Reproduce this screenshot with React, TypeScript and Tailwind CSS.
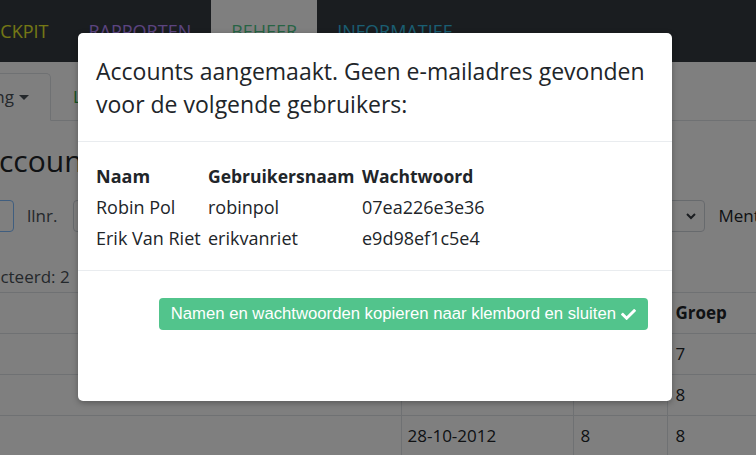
import { FaCheck } from "react-icons/fa";

const navItems = [
  { label: "COCKPIT", color: "text-[#e8ee2a]", active: false },
  { label: "RAPPORTEN", color: "text-[#b889ff]", active: false },
  { label: "BEHEER", color: "text-[#4fc98a]", active: true },
  { label: "INFORMATIEF", color: "text-[#34bde4]", active: false },
];

const users = [
  { naam: "Robin Pol", gebruiker: "robinpol", wachtwoord: "07ea226e3e36" },
  { naam: "Erik Van Riet", gebruiker: "erikvanriet", wachtwoord: "e9d98ef1c5e4" },
];

const rows = [
  { id: 1, datum: "02-03-2012", leerjaar: "7", groep: "7" },
  { id: 2, datum: "19-11-2012", leerjaar: "8", groep: "8" },
  { id: 3, datum: "28-10-2012", leerjaar: "8", groep: "8" },
];

function Page() {
  return (
    <div className="w-full h-full bg-white text-[#212529]">
      <nav className="h-[62px] bg-[#343a40] flex items-stretch ml-[-45px]">
        {navItems.map((item) => (
          <a
            key={item.label}
            href="#"
            className={`px-5 flex items-center text-[18px] ${item.color} ${
              item.active ? "bg-white" : ""
            }`}
          >
            {item.label}
          </a>
        ))}
      </nav>

      <div className="ml-[-20px] w-[900px]">
        <div className="mt-[11px] h-[48px] flex items-stretch border-b border-[#dee2e6]">
          <div className="w-[71px] border border-[#dee2e6] border-b-white rounded-tr-[5px] mb-[-1px] flex items-center justify-end pr-[21px] text-[17px] text-[#495057]">
            <span className="ml-[-60px] whitespace-nowrap">Indeling</span>
            <span className="ml-[5px] border-x-[5px] border-x-transparent border-t-[5px] border-t-[#495057]" />
          </div>
          <a href="#" className="pl-[22px] flex items-center text-[17px] text-[#28a745]">
            Leerlingen
          </a>
        </div>

        <h1 className="mt-[22px] text-[30px] leading-[36px]">Accounts beheren</h1>

        <div className="mt-[21px] flex items-center h-[32px] text-[17px]">
          <div className="w-[34px] h-[32px] border border-[#80bdff] rounded-[4px]" />
          <span className="ml-[13px] text-[#495057]">llnr.</span>
          <div className="ml-[16px] w-[300px] h-[32px] border border-[#ced4da] rounded-[4px]" />
          <div className="ml-[152px] w-[180px] h-[32px] border border-[#ced4da] rounded-[4px] flex items-center justify-end pr-[8px]">
            <svg width="10" height="7" viewBox="0 0 10 7">
              <path d="M1 1l4 4 4-4" fill="none" stroke="#343a40" strokeWidth="2" />
            </svg>
          </div>
          <span className="ml-[13px]">Mentor</span>
        </div>

        <div className="mt-[33px] ml-[-33px] h-[24px] leading-[24px] text-[17px] text-[#495057]">
          Geselecteerd: 2
        </div>

        <table className="mt-[3px] border-collapse text-[17px]">
          <thead>
            <tr className="h-[41px]">
              <th className="w-[421px] border-y border-[#dee2e6]" />
              <th className="w-[172px] border border-[#dee2e6] px-[6px] text-left">Geboortedatum</th>
              <th className="w-[94px] border border-[#dee2e6] px-[7px] text-left">Lj.</th>
              <th className="w-[120px] border border-[#dee2e6] px-[8px] text-left">Groep</th>
            </tr>
          </thead>
          <tbody>
            {rows.map((r) => (
              <tr key={r.id} className="h-[41px]">
                <td className="border-y border-[#dee2e6]" />
                <td className="border border-[#dee2e6] px-[6px]">{r.datum}</td>
                <td className="border border-[#dee2e6] px-[7px]">{r.leerjaar}</td>
                <td className="border border-[#dee2e6] px-[8px]">{r.groep}</td>
              </tr>
            ))}
          </tbody>
        </table>
      </div>
    </div>
  );
}

function AccountsModal() {
  return (
    <div className="absolute left-[78px] top-[33px] w-[594px] h-[368px] bg-white rounded-[5px] shadow-[0_2px_6px_rgba(0,0,0,0.3)] flex flex-col text-[#212529]">
      <div className="px-[18px] pt-[22px] pb-[20px] border-b border-[#e9ecef]">
        <h2 className="text-[23px] leading-[33px]">
          Accounts aangemaakt. Geen e-mailadres gevonden voor de volgende gebruikers:
        </h2>
      </div>
      <div className="px-[18px] pt-[19px] pb-[16px] border-b border-[#e9ecef]">
        <table className="text-[18px]">
          <thead>
            <tr className="h-[31px]">
              <th className="w-[112px] text-left font-bold">Naam</th>
              <th className="w-[154px] text-left font-bold text-[17.5px]">Gebruikersnaam</th>
              <th className="text-left font-bold text-[17.5px]">Wachtwoord</th>
            </tr>
          </thead>
          <tbody>
            {users.map((u) => (
              <tr key={u.gebruiker} className="h-[31px]">
                <td className="whitespace-nowrap">{u.naam}</td>
                <td>{u.gebruiker}</td>
                <td>{u.wachtwoord}</td>
              </tr>
            ))}
          </tbody>
        </table>
      </div>
      <div className="flex justify-end pt-[27px] pr-[24px]">
        <button className="h-[32px] px-[12px] rounded-[4px] bg-[#52c48c] text-white text-[16.7px] font-['Liberation_Sans',Arial,sans-serif] flex items-center gap-[5px]">
          Namen en wachtwoorden kopieren naar klembord en sluiten
          <FaCheck size={15} />
        </button>
      </div>
    </div>
  );
}

export default function App() {
  return (
    <div className="relative w-[756px] h-[455px] overflow-hidden font-['Open_Sans',sans-serif]">
      <Page />
      <div className="absolute inset-0 bg-black/50" />
      <AccountsModal />
    </div>
  );
}
